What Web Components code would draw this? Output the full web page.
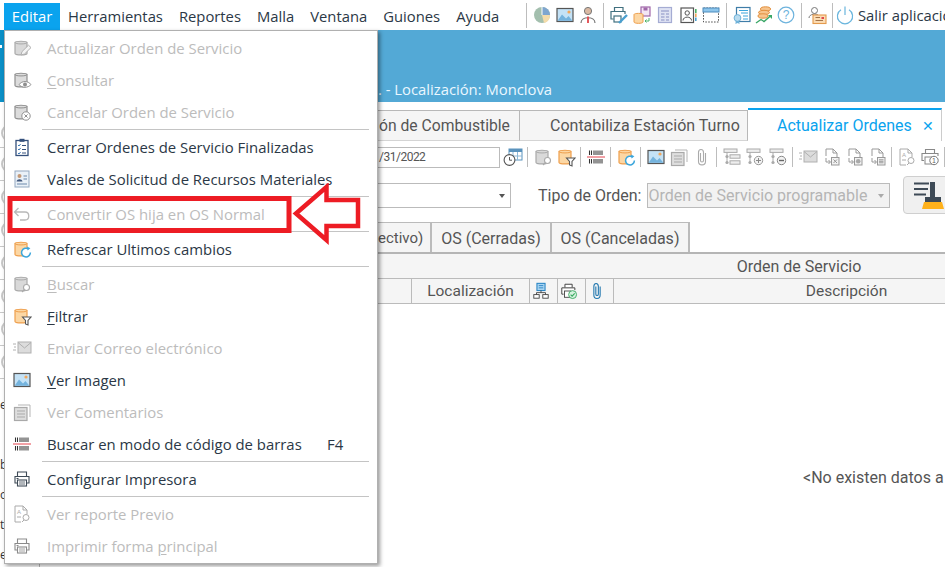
<!DOCTYPE html>
<html lang="es">
<head>
<meta charset="utf-8">
<title>Actualizar Ordenes</title>
<style>
  html, body { margin: 0; height: 100%; overflow: hidden; background: #fff; }
  body { font-family: "Open Sans", "Noto Sans", sans-serif; color: #2b3846; }
  u { text-underline-offset: 2px; }
</style>
</head>
<body>
<app-shell>
  <app-menubar slot="top"></app-menubar>
  <app-banner slot="top">. - Localización: Monclova</app-banner>
  <side-panel slot="side"></side-panel>
  <app-workspace slot="main"></app-workspace>
  <app-menu slot="overlay">
    <menu-item icon="dbEdit" disabled>Actualizar Orden de Servicio</menu-item>
    <menu-item icon="dbView" disabled><u>C</u>onsultar</menu-item>
    <menu-item icon="dbCancel" disabled>Cancelar Orden de Servicio</menu-item>
    <menu-sep></menu-sep>
    <menu-item icon="checklist">Cerrar Ordenes de Servicio Finalizadas</menu-item>
    <menu-item icon="vale">Vales de Solicitud de Recursos Materiales</menu-item>
    <menu-sep></menu-sep>
    <menu-item icon="undo" disabled>Convertir OS hija en OS Normal</menu-item>
    <menu-sep></menu-sep>
    <menu-item icon="dbRefresh">Refrescar Ultimos cambios</menu-item>
    <menu-sep></menu-sep>
    <menu-item icon="dbSearch" disabled><u>B</u>uscar</menu-item>
    <menu-item icon="dbFilter"><u>F</u>iltrar</menu-item>
    <menu-item icon="mail" disabled>Enviar Correo electrónico</menu-item>
    <menu-item icon="image"><u>V</u>er Imagen</menu-item>
    <menu-item icon="comments" disabled>Ver Comentarios</menu-item>
    <menu-item icon="barcode" shortcut="F4">Buscar en modo de código de barras</menu-item>
    <menu-sep></menu-sep>
    <menu-item icon="printer">Configurar Impresora</menu-item>
    <menu-sep></menu-sep>
    <menu-item icon="report" disabled>Ver reporte Previo</menu-item>
    <menu-item icon="printerGray" disabled>Imprimir forma <u>p</u>rincipal</menu-item>
  </app-menu>
  <red-callout slot="overlay"></red-callout>
</app-shell>

<script>
// Icon drawings, all on a 20x20 grid
const cyl = (fill, stroke) => `<path d="M3 4.5C3 2.8 15 2.8 15 4.5V15.5C15 17.4 3 17.4 3 15.5Z" fill="${fill}" stroke="${stroke}" stroke-width="1.2"/><path d="M3 4.5C3 6.4 15 6.4 15 4.5" fill="none" stroke="${stroke}" stroke-width="1"/>`
const GRAY = ['#d9d9d9', '#a9a9a9']
const ORANGE = ['#fcd7a4', '#ee9f4d']
const lens = c => `<circle cx="14.5" cy="13.5" r="3" fill="#fff" stroke="${c}" stroke-width="1.1"/><path d="M12.3 15.7L10 18" stroke="${c}" stroke-width="1.1"/>`
const funnel = `<path d="M10.5 11H19L16 14.5V19L13.5 18V14.5Z" fill="#fff" stroke="#555" stroke-width="1.1"/>`
const refresh = `<path d="M18.4 13.5A4.4 4.4 0 1 1 16.6 10" fill="#fff" stroke="#3ba6dc" stroke-width="1.5"/><path d="M15 7.6L18.4 9.2L15.6 11.6Z" fill="#3ba6dc"/>`
const photo = `<rect x="2" y="3.5" width="16" height="13" fill="#c4e2f6" stroke="#555" stroke-width="1.2"/><path d="M2.6 15.8L7 9.5L11 13.5L13.5 11L17.4 15.8Z" fill="#74b3dd"/><circle cx="14" cy="7" r="1.6" fill="#f2a65a"/>`
const printerBody = c => `<path d="M5.5 7V3H14.5V7M5.5 14H3V7.5H17V14H14.5" fill="#fff" stroke="${c}" stroke-width="1.1"/><rect x="5.5" y="11" width="9" height="6" fill="#fff" stroke="${c}" stroke-width="1.1"/><path d="M7 13H13M7 15H13" stroke="${c}" stroke-width=".8"/><rect x="4.5" y="9" width="2" height="1" fill="${c}"/>`
const docBase = c => `<path d="M5 2H12L16 6V12M5 2V9M12 2V6H16" fill="none" stroke="${c}" stroke-width="1"/>`
const docMove = c => `<path d="M5 11V15H9M7.5 13L9.5 15L7.5 17" fill="none" stroke="${c}" stroke-width="1"/><rect x="10.5" y="10.5" width="7.5" height="7.5" fill="#f2f2f2" stroke="${c}" stroke-width="1"/>`
const treeBase = `<rect x="2" y="2" width="13" height="3.4" fill="#eee" stroke="#aaa"/><path d="M5 5.5V15" stroke="#aaa"/><circle cx="5" cy="9.5" r="1.6" fill="#aaa"/><circle cx="5" cy="15.5" r="1.6" fill="#aaa"/>`

const ICONS = {
  dbEdit: cyl(...GRAY) + `<path d="M9 17L10 13.6L16.5 7.2L19 9.6L12.5 16Z" fill="#f3f3f3" stroke="#b0b0b0"/>`,
  dbView: cyl('#dcdcdc', '#8f8f8f') + `<path d="M7 14.5C10 10.6 16 10.6 19 14.5C16 18.2 10 18.2 7 14.5Z" fill="#fff" stroke="#8f8f8f"/><circle cx="13" cy="14.4" r="2" fill="#8f8f8f"/>`,
  dbCancel: cyl('#dcdcdc', '#8f8f8f') + `<circle cx="14" cy="14" r="4.2" fill="#fff" stroke="#8f8f8f"/><path d="M12.4 12.4L15.6 15.6M15.6 12.4L12.4 15.6" stroke="#8f8f8f"/>`,
  checklist: `<rect x="4" y="3.5" width="12" height="15" fill="#fff" stroke="#34507c" stroke-width="1.3"/><rect x="7.5" y="1.8" width="5" height="3" fill="#34507c"/><path d="M6 8L7 9L8.6 7M6 12L7 13L8.6 11M6 16L7 17L8.6 15" fill="none" stroke="#3e78b5"/><path d="M10 8.5H14M10 12.5H14M10 16H14" stroke="#34507c"/>`,
  vale: `<rect x="3" y="2" width="14" height="16" fill="#eaf1f8" stroke="#93a8c0"/><circle cx="7.5" cy="7" r="2" fill="#c49a77"/><path d="M4.5 12.5C5 9.5 10 9.5 10.5 12.5Z" fill="#40577c"/><path d="M5 15H15M11.5 7H15M11.5 10H15" stroke="#6b88aa"/>`,
  undo: `<path d="M6.5 4L2.5 8L6.5 12M3 8H13C18 8 18 16 13 16H8" fill="none" stroke="#b8b8b8" stroke-width="1.3"/>`,
  dbRefresh: cyl(...ORANGE) + refresh,
  dbSearch: cyl(...GRAY) + lens('#a9a9a9'),
  dbFilter: cyl(...ORANGE) + funnel,
  mail: `<rect x="6" y="4" width="13" height="11" fill="#dcdcdc" stroke="#b0b0b0"/><path d="M6 4.5L12.5 10L19 4.5" fill="none" stroke="#b0b0b0"/><path d="M1 6H4M2 9H4M1 12H4" stroke="#b0b0b0"/>`,
  image: photo,
  comments: `<path d="M6 3H18V15" fill="none" stroke="#b5b5b5"/><rect x="2.5" y="5.5" width="12.5" height="13" fill="#dedede" stroke="#a9a9a9" stroke-width="1.2"/><path d="M5 9H13M5 12H13M5 15H13" stroke="#a9a9a9"/>`,
  barcode: `<path d="M3.5 3.5V8M5.5 3.5V8M8 3.5V8M10 3.5V8M12 3.5V8M14 3.5V8M16 3.5V8M3.5 12V16.5M5.5 12V16.5M8 12V16.5M10 12V16.5M12 12V16.5M14 12V16.5M16 12V16.5" stroke="#333" stroke-width="1.05"/><path d="M1 10H19" stroke="#e4424c" stroke-width="1"/>`,
  printer: printerBody('#3e4a56'),
  printerGray: printerBody('#8b8b8b'),
  report: `<path d="M3 2H11L15 6V10M3 2V18H9M11 2V6H15" fill="none" stroke="#aaa"/><text x="5" y="10" font-size="6" font-family="Liberation Sans" fill="#aaa">A</text><path d="M5 13H9" stroke="#aaa"/><circle cx="14" cy="13.5" r="3" fill="#fff" stroke="#aaa"/><path d="M12 16L10 18" stroke="#aaa"/>`,
  pie: `<circle cx="10" cy="10" r="8" fill="#a3bfae"/><path d="M10 10V2A8 8 0 0 1 18 10Z" fill="#7fa6cf"/><path d="M10 10H18A8 8 0 0 1 12 18Z" fill="#f5dcaa"/><path d="M10 10L10 2" stroke="#fff"/>`,
  person: `<circle cx="10" cy="6" r="3.6" fill="#d9b9a3" stroke="#777"/><path d="M3 18C3 11 17 11 17 18" fill="#fff" stroke="#777" stroke-width="1.2"/><path d="M10 11.5V18" stroke="#e0474c" stroke-width="1.8"/>`,
  printWrench: `<path d="M5.5 6V2.5H14V6M4.5 14H2V6.5H16V9" fill="#fff" stroke="#41707f" stroke-width="1.2"/><rect x="5" y="11" width="7" height="6" fill="#fff" stroke="#41707f" stroke-width="1.2"/><path d="M10 18L18 10" stroke="#4aa0cf" stroke-width="2.4"/>`,
  dbSave: `<rect x="9" y="2" width="9" height="9" fill="#f3e6f4" stroke="#a067a9" stroke-width="1.2"/><rect x="11.5" y="2.5" width="4" height="3" fill="#a067a9"/><path d="M2 9.5C2 8 11 8 11 9.5V17C11 18.8 2 18.8 2 17Z" fill="#fcd7a4" stroke="#ee9f4d"/><path d="M17 13V16H13M14.5 14.5L13 16L14.5 17.5" fill="none" stroke="#4db36b"/>`,
  layout: `<rect x="3.5" y="2.5" width="13" height="15" fill="#dfe3f3" stroke="#a5acd3" stroke-width="1.2"/><path d="M6 6H14M6 9H9.5M11 9H14M6 12H9.5M11 12H14M6 15H9.5M11 15H14" stroke="#a5acd3" stroke-width="1.4"/>`,
  contact: `<rect x="3" y="3" width="12.5" height="14.5" fill="#fff" stroke="#555" stroke-width="1.2"/><circle cx="9.2" cy="8" r="2.2" fill="none" stroke="#555"/><path d="M5 15.5C5 11 13.5 11 13.5 15.5" fill="none" stroke="#555"/><path d="M17 4H18.6V8H17Z" fill="#4db36b"/><path d="M17 8.5H18.6V12H17Z" fill="#f2a65a"/><path d="M17 12.5H18.6V16H17Z" fill="#4aa0cf"/>`,
  windowBox: `<rect x="2.5" y="3" width="15" height="14" fill="none" stroke="#555" stroke-dasharray="1.6 1.3"/><rect x="2" y="3" width="16" height="4" fill="#8ec6ec" stroke="#4d8cbe"/>`,
  cert: `<rect x="4.5" y="2.5" width="13.5" height="14" fill="#fff" stroke="#3f7da8" stroke-width="1.2"/><path d="M7 5.5H16M9 8H16M11 11H16M11 14H16" stroke="#3ba6dc" stroke-width="1.1"/><circle cx="5.5" cy="13" r="3.4" fill="#b9dcf0" stroke="#6fb2d9"/><path d="M3.8 16L3.4 19L5.5 18L7.6 19L7.2 16" fill="#6fb2d9"/>`,
  coins: `<ellipse cx="11.5" cy="4" rx="5" ry="2.2" fill="#f7c48c" stroke="#e28f3e"/><ellipse cx="10" cy="7.5" rx="5.5" ry="2.2" fill="#f7c48c" stroke="#e28f3e"/><ellipse cx="9" cy="11" rx="5" ry="2.2" fill="#f7c48c" stroke="#e28f3e"/><path d="M2 18L7 14.5L10 16.5L17 10.5" fill="none" stroke="#3aa767" stroke-width="1.4"/><path d="M14 10H18V14Z" fill="#3aa767"/>`,
  help: `<circle cx="10" cy="10" r="7.8" fill="#fff" stroke="#6db3dd" stroke-width="1.2"/><text x="10" y="14.2" text-anchor="middle" font-size="12" font-family="Liberation Sans" fill="#6db3dd">?</text>`,
  userCard: `<circle cx="7.5" cy="5.5" r="3" fill="#fff" stroke="#777"/><path d="M2 13C2 8.5 10 8.5 11 10" fill="none" stroke="#777"/><rect x="6" y="10" width="13" height="8.5" fill="#fbdcb4" stroke="#e49a4d" stroke-width="1.1"/><rect x="14.5" y="12" width="2.5" height="2" fill="#e0474c"/><path d="M8.5 12.5H13M8.5 15.5H16" stroke="#a2744a"/>`,
  power: `<path d="M6 4.8A7.6 7.6 0 1 0 14 4.8" fill="none" stroke="#69b5dd" stroke-width="1.2"/><path d="M10 1.5V10" stroke="#69b5dd" stroke-width="1.2"/>`,
  calClock: `<rect x="6" y="2" width="13" height="11" fill="#fff" stroke="#5b93bd"/><rect x="6" y="2" width="13" height="3" fill="#5b93bd"/><path d="M10 5V13M14.5 5V13M6 9H19" stroke="#8eb9d8"/><circle cx="6.5" cy="13" r="5.4" fill="#fff" stroke="#555" stroke-width="1.1"/><path d="M6.5 10V13.2H9" fill="none" stroke="#555"/>`,
  clip: `<path d="M13.5 6V14.5C13.5 19 6.5 19 6.5 14.5V5.5C6.5 1.5 11.5 1.5 11.5 5.5V13.5C11.5 15.5 8.5 15.5 8.5 13.5V6" fill="none" stroke="#aaa" stroke-width="1.1"/>`,
  tree: treeBase + `<rect x="8" y="7.8" width="10" height="3.4" fill="#eee" stroke="#aaa"/><rect x="8" y="13.8" width="10" height="3.4" fill="#eee" stroke="#aaa"/>`,
  treePlus: treeBase + `<circle cx="13.5" cy="13.5" r="4.2" fill="#f2f2f2" stroke="#999"/><path d="M11 13.5H16M13.5 11V16" stroke="#888"/>`,
  treeMinus: treeBase + `<circle cx="13.5" cy="13.5" r="4.2" fill="#f2f2f2" stroke="#888"/><path d="M11 13.5H16" stroke="#666" stroke-width="1.4"/>`,
  docX: docBase('#999') + docMove('#999') + `<path d="M12.5 12.5L16 16M16 12.5L12.5 16" stroke="#999"/>`,
  docDot: docBase('#999') + docMove('#999') + `<circle cx="14.2" cy="14.2" r="2.3" fill="#aaa"/>`,
  docList: docBase('#999') + docMove('#999') + `<path d="M12 12.8H16.5M12 14.3H16.5M12 15.8H16.5" stroke="#999"/>`,
  printOne: `<path d="M5.5 6V2.5H14.5V6M4 13.5H2V6.5H18V9" fill="#fff" stroke="#888" stroke-width="1.1"/><rect x="5" y="10" width="7" height="7" fill="#fff" stroke="#888"/><circle cx="14" cy="13.5" r="4.2" fill="#fff" stroke="#777"/><text x="14" y="16.2" text-anchor="middle" font-size="7" font-family="Liberation Sans" fill="#666">1</text>`,
  network: `<rect x="5.5" y="1.5" width="9" height="8" fill="#a9d5f2" stroke="#2b86c5" stroke-width="1.2"/><path d="M7.5 4H12.5M7.5 6.5H12.5" stroke="#2b86c5"/><rect x="2" y="14" width="6" height="4" fill="#fff" stroke="#444"/><rect x="12" y="14" width="6" height="4" fill="#fff" stroke="#444"/><path d="M5 14V11.8H15V14M10 9.5V11.8" fill="none" stroke="#444"/>`,
  printCheck: `<path d="M5.5 6V2.5H13.5V6M4 13.5H2V6.5H16.5V9" fill="#fff" stroke="#444" stroke-width="1.1"/><rect x="5" y="10" width="7" height="7" fill="#fff" stroke="#444"/><circle cx="14" cy="14" r="4.4" fill="#d6f2df" stroke="#37a85f"/><path d="M11.8 14L13.5 15.8L16.3 12.6" fill="none" stroke="#37a85f" stroke-width="1.2"/>`,
  clipBlue: `<path d="M13.5 5V14.5C13.5 19.5 6.5 19.5 6.5 14.5V5C6.5 .5 11.5 .5 11.5 5V13.5C11.5 15.5 8.7 15.5 8.7 13.5V5" fill="none" stroke="#1f76ae" stroke-width="1.2"/>`,
  broom: `<path d="M3 3.5H18M3 9H17M3 14.5H15" stroke="#3e4a56" stroke-width="1.8"/><rect x="19" y="2" width="5" height="15" fill="#3e4a56"/><path d="M14 17H30V22H14Z" fill="#3e4a56"/><path d="M13 22H31L33 29H11Z" fill="#ffb11b"/>`
}

class UiIcon extends HTMLElement {
  connectedCallback() {
    const size = this.getAttribute('size') || 20
    const box = this.getAttribute('box') || 20
    this.attachShadow({ mode: 'open' }).innerHTML = `
      <style>:host { display: inline-flex; flex: none; } svg { display: block; }</style>
      <svg width="${size}" height="${size}" viewBox="0 0 ${box} ${box}">${ICONS[this.getAttribute('name')] || ''}</svg>`
  }
}

class AppShell extends HTMLElement {
  connectedCallback() {
    this.attachShadow({ mode: 'open' }).innerHTML = `
      <style>
        :host { display: grid; grid-template-columns: 378px 567px; grid-template-rows: auto 465px; width: 945px; height: 567px; overflow: hidden; position: relative; }
        .top { grid-column: 1 / 3; display: block; }
      </style>
      <div class="top"><slot name="top"></slot></div>
      <slot name="side"></slot>
      <slot name="main"></slot>
      <slot name="overlay"></slot>`
  }
}

class AppMenubar extends HTMLElement {
  connectedCallback() {
    const groups = [
      ['pie', 'image', 'person'],
      ['printWrench', 'dbSave', 'layout', 'contact', 'windowBox'],
      ['cert', 'coins', 'help'],
      ['userCard']
    ]
    const icons = groups.map((g, i) => `<i class="sep"></i><span class="group${i === 2 ? ' tight' : ''}">${g.map(n => `<ui-icon name="${n}"></ui-icon>`).join('')}</span>`).join('')
    const labels = ['Herramientas', 'Reportes', 'Malla', 'Ventana', 'Guiones', 'Ayuda']
    this.attachShadow({ mode: 'open' }).innerHTML = `
      <style>
        :host { display: flex; align-items: flex-end; height: 30px; background: #fff; font-size: 14.8px; white-space: nowrap; overflow: hidden; color: #2b3846; }
        .active { flex: none; margin-left: 4px; width: 56px; height: 27px; padding-bottom: 1px; box-sizing: border-box; background: #0aa3ee; color: #fff; display: flex; align-items: center; justify-content: center; }
        .labels { flex: none; display: flex; gap: 16px; margin-left: 8px; height: 27px; padding-bottom: 1px; box-sizing: border-box; align-items: center; width: 458px; }
        .tools { flex: none; display: flex; align-items: center; height: 30px; }
        .group { display: flex; gap: 3px; padding: 0 5px; align-items: center; }
        .group.tight { gap: 2px; }
        .sep { width: 1px; height: 25px; background: #bdbdbd; }
        .exit { display: flex; align-items: center; gap: 3px; padding: 0 0 1px 2px; }
      </style>
      <div class="active">Editar</div>
      <div class="labels">${labels.map(l => `<span>${l}</span>`).join('')}</div>
      <div class="tools">${icons}<i class="sep"></i><span class="exit"><ui-icon name="power"></ui-icon>Salir aplicación</span></div>`
  }
}

class AppBanner extends HTMLElement {
  connectedCallback() {
    this.attachShadow({ mode: 'open' }).innerHTML = `
      <style>
        :host { display: flex; height: 72px; background: #53a9d6; color: #eaf7ff; font-size: 14.8px; padding-left: 378px; box-sizing: border-box; align-items: flex-end; position: relative; }
        .edge { position: absolute; left: 0; top: 0; width: 5px; height: 72px; background: #0b8fc6; }
        .edge::after { content: ""; position: absolute; left: 0; top: 15px; width: 2px; height: 3px; background: #fff; }
        span { padding-bottom: 3px; }
      </style>
      <div class="edge"></div><span><slot></slot></span>`
  }
}

// Rows of the panel that the menu covers; only the left edge shows
class SidePanel extends HTMLElement {
  connectedCallback() {
    const rows = Array.from({ length: 8 }, () => '<div class="row"><i></i></div>').join('')
    const tail = ['e', '', 'b', 'o', 't', 'er'].map(t => `<div class="txt">${t}</div>`).join('')
    this.attachShadow({ mode: 'open' }).innerHTML = `
      <style>
        :host { display: block; overflow: hidden; background: #fff; border-right: 1px solid #bbb; width: 40px; box-sizing: border-box; }
        .row { height: 33px; border-bottom: 1px solid #c8c8c8; box-sizing: border-box; display: flex; align-items: center; }
        .row:first-of-type { height: 46px; align-items: flex-end; padding-bottom: 5px; }
        i { width: 18px; height: 18px; margin-left: 1px; border: 2px solid #c8c8c8; border-radius: 50%; box-sizing: border-box; flex: none; }
        .txt { height: 30px; font-size: 12px; line-height: 30px; color: #333; }
        .tail { padding-top: 11px; }
      </style>
      ${rows}<div class="tail">${tail}</div>`
  }
}

class AppMenu extends HTMLElement {
  connectedCallback() {
    this.attachShadow({ mode: 'open' }).innerHTML = `
      <style>
        :host { position: absolute; left: 4px; top: 30px; width: 374px; height: 534px; box-sizing: border-box; padding-top: 1px; background: #fff; border: 1px solid #b0b0b0; box-shadow: 2px 2px 4px rgba(0,0,0,.4); display: block; }
      </style>
      <slot></slot>`
  }
}

class MenuItem extends HTMLElement {
  connectedCallback() {
    const off = this.hasAttribute('disabled')
    const key = this.getAttribute('shortcut')
    this.attachShadow({ mode: 'open' }).innerHTML = `
      <style>
        :host { display: flex; align-items: center; height: 32px; font-size: 14.9px; white-space: nowrap; color: ${off ? '#bcbcbc' : '#2b3846'}; }
        ui-icon { margin: 0 15px 0 7px; width: 20px; height: 20px; }
        .label { flex: 1; }
        .key { width: 50px; }
      </style>
      <ui-icon name="${this.getAttribute('icon')}"></ui-icon>
      <span class="label"><slot></slot></span>
      ${key ? `<span class="key">${key}</span>` : ''}`
  }
}

class MenuSep extends HTMLElement {
  connectedCallback() {
    this.attachShadow({ mode: 'open' }).innerHTML = `
      <style>
        :host { display: block; height: 3px; padding: 1px 8px 1px 37px; box-sizing: border-box; }
        div { height: 1px; background: #c4c4c4; }
      </style>
      <div></div>`
  }
}

// Red rectangle and arrow someone drew on top of the screenshot
class RedCallout extends HTMLElement {
  connectedCallback() {
    this.attachShadow({ mode: 'open' }).innerHTML = `
      <style>
        :host { position: absolute; left: 7px; top: 183px; display: block; pointer-events: none; }
        svg { display: block; }
      </style>
      <svg width="354" height="62" viewBox="7 183 354 62">
        <rect x="10" y="198.5" width="279" height="32" fill="none" stroke="#ed1c24" stroke-width="5"/>
        <path d="M296 213.5L326.5 187V200H358V226H326.5V240Z" fill="#fff" stroke="#ed1c24" stroke-width="4.5"/>
      </svg>`
  }
}

class AppWorkspace extends HTMLElement {
  connectedCallback() {
    const bar = groups => groups.map(g => `<span class="group">${g.map(n => `<ui-icon name="${n}"></ui-icon>`).join('')}</span>`).join('<i class="sep"></i>')
    this.attachShadow({ mode: 'open' }).innerHTML = `
      <style>
        :host { display: block; overflow: hidden; font-family: Roboto, "Liberation Sans", sans-serif; font-size: 16px; color: #555; white-space: nowrap; }
        .tabs { display: flex; height: 33px; margin-top: 6px; align-items: flex-end; }
        .tab { flex: none; height: 31px; box-sizing: border-box; display: flex; align-items: center; background: #f5f5f5; border-top: 1px solid #b8b8b8; border-right: 1px solid #b8b8b8; border-bottom: 1px solid #d4d4d4; }
        .tab.fuel { width: 142px; padding-left: 1px; font-size: 15.7px; }
        .tab.turno { width: 228px; padding-left: 30px; }
        .tab.on { height: 33px; width: 194px; padding-left: 29px; background: #fff; border-top: 2px solid #0aa3ee; border-bottom: 0; color: #0aa3ee; gap: 10px; border-right: 1px solid #ccc; }
        .tab.on b { font-weight: 400; font-size: 14px; }
        .toolbar { display: flex; align-items: center; height: 22px; margin-top: 5px; }
        .date { flex: none; width: 122px; height: 21px; box-sizing: border-box; border: 1px solid #bbb; border-left: 0; font-size: 12px; letter-spacing: -.5px; line-height: 19px; padding-left: 1px; margin-right: -2px; }
        .group { flex: none; display: flex; gap: 3px; padding: 0 4.5px; align-items: center; }
        .sep { width: 1px; height: 20px; background: #bdbdbd; flex: none; }
        .filters { display: flex; align-items: center; height: 38px; margin-top: 8px; }
        .combo { flex: none; height: 25px; box-sizing: border-box; border: 1px solid #bbb; display: flex; align-items: center; justify-content: flex-end; }
        .combo::after { content: ""; border: 3.5px solid transparent; border-top: 4px solid #555; margin: 4px 5px 0; }
        .combo.one { width: 133px; border-left: 0; }
        .combo.two { width: 243px; background: #f2f2f2; color: #b5b5b5; justify-content: space-between; padding-left: 1px; }
        .combo.two::after { border-top-color: #aaa; }
        label { flex: none; margin: 0 5px 0 27px; }
        .clear { flex: none; margin-left: 13px; width: 60px; height: 38px; box-sizing: border-box; border: 1px solid #cfcfcf; border-radius: 4px; background: #f0f0f0; padding: 3px 7px; }
        .subtabs { display: flex; height: 30px; margin-top: 8px; box-sizing: border-box; }
        .sub { flex: none; display: flex; align-items: center; justify-content: center; box-sizing: border-box; padding-top: 1px; background: #f5f5f5; border-top: 1px solid #bbb; border-right: 2px solid #bbb; }
        .sub.first { width: 54px; justify-content: flex-start; font-size: 15px; }
        .head { background: #f5f5f5; border-top: 2px solid #b5b5b5; height: 27px; box-sizing: border-box; border-bottom: 1px solid #bbb; text-align: center; line-height: 25px; padding-left: 275px; }
        .cols { display: grid; grid-template-columns: 34px 118px 28px 28px 28px 1fr; height: 25px; background: #f5f5f5; border-bottom: 1px solid #bbb; box-sizing: border-box; font-size: 15.5px; }
        .cols > div { border-right: 1px solid #bbb; display: flex; align-items: center; justify-content: center; }
        .cols > div:last-child { border-right: 0; padding-left: 134px; }
        .cols ui-icon { margin-right: 6px; }
        .empty { padding: 164px 0 0 425px; }
      </style>
      <div class="tabs">
        <div class="tab fuel">ón de Combustible</div>
        <div class="tab turno">Contabiliza Estación Turno</div>
        <div class="tab on">Actualizar Ordenes <b>✕</b></div>
      </div>
      <div class="toolbar">
        <div class="date">/31/2022</div>
        ${bar([['calClock'], ['dbSearch', 'dbFilter'], ['barcode'], ['dbRefresh'], ['image', 'comments', 'clip'], ['tree', 'treePlus', 'treeMinus'], ['mail', 'docX', 'docDot', 'docList'], ['report', 'printOne'], []])}
      </div>
      <div class="filters">
        <div class="combo one"></div>
        <label>Tipo de Orden:</label>
        <div class="combo two">Orden de Servicio programable</div>
        <div class="clear"><ui-icon name="broom" size="34" box="34"></ui-icon></div>
      </div>
      <div class="subtabs">
        <div class="sub first">ectivo)</div>
        <div class="sub" style="width:120px">OS (Cerradas)</div>
        <div class="sub" style="width:138px">OS (Canceladas)</div>
      </div>
      <div class="head">Orden de Servicio</div>
      <div class="cols">
        <div></div>
        <div>Localización</div>
        <div><ui-icon name="network" size="18"></ui-icon></div>
        <div><ui-icon name="printCheck" size="18"></ui-icon></div>
        <div><ui-icon name="clipBlue" size="18"></ui-icon></div>
        <div>Descripción</div>
      </div>
      <div class="empty">&lt;No existen datos a</div>`
  }
}

customElements.define('ui-icon', UiIcon)
customElements.define('app-shell', AppShell)
customElements.define('app-menubar', AppMenubar)
customElements.define('app-banner', AppBanner)
customElements.define('side-panel', SidePanel)
customElements.define('app-menu', AppMenu)
customElements.define('menu-item', MenuItem)
customElements.define('menu-sep', MenuSep)
customElements.define('red-callout', RedCallout)
customElements.define('app-workspace', AppWorkspace)
</script>
</body>
</html>
